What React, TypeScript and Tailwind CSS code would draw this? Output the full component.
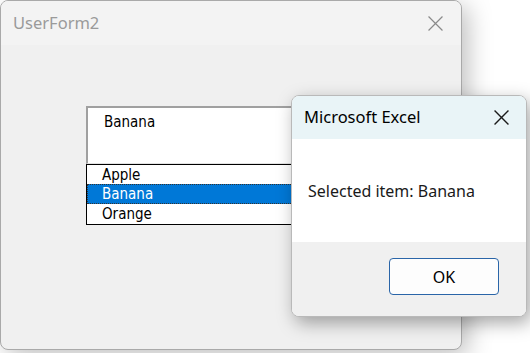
import React from "react";

function CloseX({ color, size, stroke }: { color: string; size: number; stroke: number }) {
  return (
    <svg width={size} height={size} viewBox="0 0 14 14" fill="none">
      <path d="M0.5 0.5 L13.5 13.5 M13.5 0.5 L0.5 13.5" stroke={color} strokeWidth={stroke} />
    </svg>
  );
}

export default function App() {
  return (
    <div className="relative w-[530px] h-[353px] bg-white overflow-hidden" style={{ fontFamily: '"Noto Sans", "Open Sans", sans-serif' }}>
      {/* UserForm window */}
      <div className="absolute left-0 top-0 w-[462px] h-[350px] rounded-[8px] border border-[#a9a9a9] bg-[#f0f0f0] flex flex-col overflow-hidden shadow-[6px_6px_24px_rgba(0,0,0,0.25)]">
        <div className="h-[44px] shrink-0 bg-[#f3f3f3] flex items-center justify-between pl-[12px] pr-[18px]">
          <span className="text-[16.5px] text-[#9a9a9a] leading-none">UserForm2</span>
          <CloseX color="#8a8a8a" size={15} stroke={1.1} />
        </div>
        <div className="flex-1 pl-[85px] pt-[61px]" style={{ fontFamily: '"DejaVu Sans Condensed", "Liberation Sans", Arial, sans-serif', fontStretch: "condensed" }}>
          <div className="w-[240px] h-[58px] bg-white border-t-2 border-l-2 border-[#a0a0a0] border-r border-b border-r-[#e3e3e3] border-b-[#e3e3e3] pl-[16px] pt-[5px] text-[15px] text-black leading-[18px]">
            Banana
          </div>
          <div className="w-[240px] border border-black bg-white text-[15px] leading-[20px]">
            <div className="h-[19px] pl-[15px] text-black leading-[20px]">Apple</div>
            <div className="h-[20px] text-white bg-[#0078d7] border border-dotted border-[#333] leading-[18px] pl-[14px]">Banana</div>
            <div className="h-[20px] pl-[15px] text-black leading-[20px]">Orange</div>
          </div>
        </div>
      </div>

      {/* Message box */}
      <div className="absolute left-[291px] top-[95px] w-[236px] h-[222px] rounded-[8px] border border-[#b9b9b9] bg-white flex flex-col overflow-hidden shadow-[4px_6px_18px_rgba(0,0,0,0.35)]">
        <div className="h-[43px] shrink-0 bg-[#e9f4f7] flex items-center justify-between pl-[12px] pr-[17px]">
          <span className="text-[16.5px] text-black leading-none">Microsoft Excel</span>
          <CloseX color="#1a1a1a" size={15} stroke={1.3} />
        </div>
        <div className="h-[103px] shrink-0 bg-white flex items-center pl-[16px]">
          <span className="text-[16px] text-[#1a1a1a] leading-none">Selected item: Banana</span>
        </div>
        <div className="flex-1 bg-[#f0f0f0] flex justify-end pt-[16px] pr-[27px]">
          <div className="w-[110px] h-[37px] rounded-[4px] border border-[#2a65a8] bg-[#fdfdfd] flex items-center justify-center text-[16px] text-black">
            OK
          </div>
        </div>
      </div>
    </div>
  );
}
